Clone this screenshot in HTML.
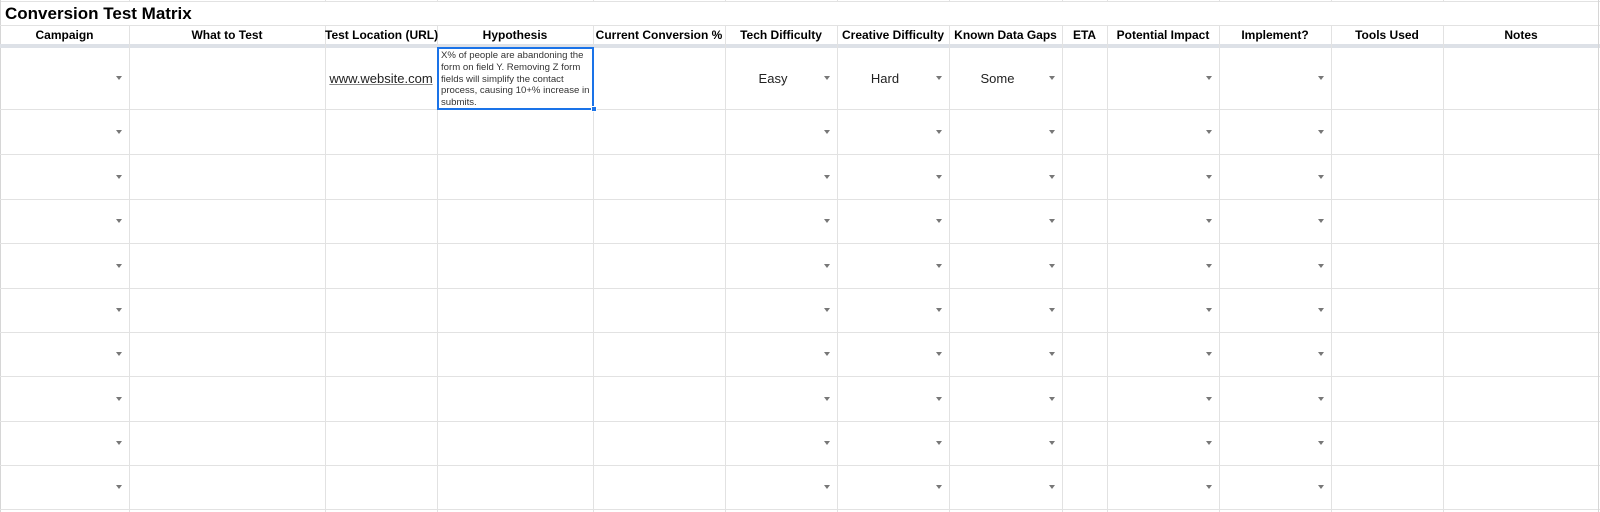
<!DOCTYPE html>
<html><head><meta charset="utf-8"><style>
*{margin:0;padding:0;box-sizing:border-box}
body{width:1600px;height:512px;overflow:hidden;background:#fff;font-family:"Liberation Sans",Arial,sans-serif;position:relative}
.v{position:absolute;width:1px;background:#e2e2e2;top:25px;height:487px}
.vt{position:absolute;width:1px;background:#e2e2e2;top:0;height:2px}
.h{position:absolute;left:0;width:1600px;height:1px;background:#e2e2e2}
.hd{position:absolute;top:26px;height:19px;font-size:12px;font-weight:bold;color:#000;text-align:center;line-height:19px;white-space:nowrap}
.a{position:absolute;width:0;height:0;border-left:3.5px solid transparent;border-right:3.5px solid transparent;border-top:4px solid #777}
.t{position:absolute;font-size:13px;color:#222;text-align:center}
</style></head><body>
<div class="h" style="top:1px"></div>
<div style="position:absolute;left:0;top:0;width:1px;height:512px;background:#d6d6d6"></div>
<div style="position:absolute;left:5px;top:4px;font-size:17px;font-weight:bold;color:#000;line-height:20px">Conversion Test Matrix</div>
<div class="h" style="top:25px"></div>
<div class="h" style="top:44px;height:4px;background:#dde1e7"></div>
<div class="h" style="top:109px"></div><div class="h" style="top:154px"></div><div class="h" style="top:199px"></div><div class="h" style="top:243px"></div><div class="h" style="top:288px"></div><div class="h" style="top:332px"></div><div class="h" style="top:376px"></div><div class="h" style="top:421px"></div><div class="h" style="top:465px"></div><div class="h" style="top:509px"></div>

<div class="v" style="left:129px"></div><div class="v" style="left:325px"></div><div class="v" style="left:437px"></div><div class="v" style="left:593px"></div><div class="v" style="left:725px"></div><div class="v" style="left:837px"></div><div class="v" style="left:949px"></div><div class="v" style="left:1062px"></div><div class="v" style="left:1107px"></div><div class="v" style="left:1219px"></div><div class="v" style="left:1331px"></div><div class="v" style="left:1443px"></div><div class="v" style="left:1598px;background:#d6d6d6;top:0;height:512px"></div>
<div class="vt" style="left:129px"></div><div class="vt" style="left:325px"></div><div class="vt" style="left:437px"></div><div class="vt" style="left:593px"></div><div class="vt" style="left:725px"></div><div class="vt" style="left:837px"></div><div class="vt" style="left:949px"></div><div class="vt" style="left:1062px"></div><div class="vt" style="left:1107px"></div><div class="vt" style="left:1219px"></div><div class="vt" style="left:1331px"></div><div class="vt" style="left:1443px"></div>

<div class="hd" style="left:0;width:129px">Campaign</div>
<div class="hd" style="left:129px;width:196px">What to Test</div>
<div class="hd" style="left:325px;width:112px">Test Location (URL)</div>
<div class="hd" style="left:437px;width:156px">Hypothesis</div>
<div class="hd" style="left:593px;width:132px">Current Conversion %</div>
<div class="hd" style="left:725px;width:112px">Tech Difficulty</div>
<div class="hd" style="left:837px;width:112px">Creative Difficulty</div>
<div class="hd" style="left:949px;width:113px">Known Data Gaps</div>
<div class="hd" style="left:1062px;width:45px">ETA</div>
<div class="hd" style="left:1107px;width:112px">Potential Impact</div>
<div class="hd" style="left:1219px;width:112px">Implement?</div>
<div class="hd" style="left:1331px;width:112px">Tools Used</div>
<div class="hd" style="left:1443px;width:156px">Notes</div>

<div class="t" style="left:325px;width:112px;top:71px;text-decoration:underline;text-decoration-color:#888">www.website.com</div>
<div class="t" style="left:725px;width:96px;top:71px">Easy</div>
<div class="t" style="left:837px;width:96px;top:71px">Hard</div>
<div class="t" style="left:949px;width:97px;top:71px">Some</div>

<div style="position:absolute;left:437px;top:47px;width:157px;height:63px;border:2px solid #1a73e8"></div>
<div style="position:absolute;left:591px;top:106px;width:6px;height:6px;background:#1a73e8;border:1px solid #fff"></div>
<div style="position:absolute;left:441px;top:50px;width:150px;font-size:9.6px;line-height:11.8px;color:#333">X% of people are abandoning the form on field Y. Removing Z form fields will simplify the contact process, causing 10+% increase in submits.</div>

<div class="a" style="left:116px;top:76px"></div><div class="a" style="left:824px;top:76px"></div><div class="a" style="left:936px;top:76px"></div><div class="a" style="left:1049px;top:76px"></div><div class="a" style="left:1206px;top:76px"></div><div class="a" style="left:1318px;top:76px"></div>
<div class="a" style="left:116px;top:130px"></div><div class="a" style="left:824px;top:130px"></div><div class="a" style="left:936px;top:130px"></div><div class="a" style="left:1049px;top:130px"></div><div class="a" style="left:1206px;top:130px"></div><div class="a" style="left:1318px;top:130px"></div>
<div class="a" style="left:116px;top:175px"></div><div class="a" style="left:824px;top:175px"></div><div class="a" style="left:936px;top:175px"></div><div class="a" style="left:1049px;top:175px"></div><div class="a" style="left:1206px;top:175px"></div><div class="a" style="left:1318px;top:175px"></div>
<div class="a" style="left:116px;top:219px"></div><div class="a" style="left:824px;top:219px"></div><div class="a" style="left:936px;top:219px"></div><div class="a" style="left:1049px;top:219px"></div><div class="a" style="left:1206px;top:219px"></div><div class="a" style="left:1318px;top:219px"></div>
<div class="a" style="left:116px;top:264px"></div><div class="a" style="left:824px;top:264px"></div><div class="a" style="left:936px;top:264px"></div><div class="a" style="left:1049px;top:264px"></div><div class="a" style="left:1206px;top:264px"></div><div class="a" style="left:1318px;top:264px"></div>
<div class="a" style="left:116px;top:308px"></div><div class="a" style="left:824px;top:308px"></div><div class="a" style="left:936px;top:308px"></div><div class="a" style="left:1049px;top:308px"></div><div class="a" style="left:1206px;top:308px"></div><div class="a" style="left:1318px;top:308px"></div>
<div class="a" style="left:116px;top:352px"></div><div class="a" style="left:824px;top:352px"></div><div class="a" style="left:936px;top:352px"></div><div class="a" style="left:1049px;top:352px"></div><div class="a" style="left:1206px;top:352px"></div><div class="a" style="left:1318px;top:352px"></div>
<div class="a" style="left:116px;top:397px"></div><div class="a" style="left:824px;top:397px"></div><div class="a" style="left:936px;top:397px"></div><div class="a" style="left:1049px;top:397px"></div><div class="a" style="left:1206px;top:397px"></div><div class="a" style="left:1318px;top:397px"></div>
<div class="a" style="left:116px;top:441px"></div><div class="a" style="left:824px;top:441px"></div><div class="a" style="left:936px;top:441px"></div><div class="a" style="left:1049px;top:441px"></div><div class="a" style="left:1206px;top:441px"></div><div class="a" style="left:1318px;top:441px"></div>
<div class="a" style="left:116px;top:485px"></div><div class="a" style="left:824px;top:485px"></div><div class="a" style="left:936px;top:485px"></div><div class="a" style="left:1049px;top:485px"></div><div class="a" style="left:1206px;top:485px"></div><div class="a" style="left:1318px;top:485px"></div>
</body></html>
